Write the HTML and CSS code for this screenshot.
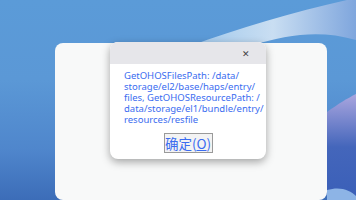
FILE: index.html
```html
<!DOCTYPE html>
<html lang="zh-cn">
<head>
    <meta charset="UTF-8">
    <title>对话框</title>
    <link rel="stylesheet" href="styles.css">
</head>
<body>
    <div class="desktop">
        <!-- 壁纸上的弧线 -->
        <svg class="wallpaper" width="356" height="200" viewBox="0 0 356 200">
            <defs>
                <linearGradient id="swoosh" x1="0" y1="0" x2="1" y2="0">
                    <stop offset="0" stop-color="#9fc8ec"/>
                    <stop offset="0.5" stop-color="#c9def2"/>
                    <stop offset="1" stop-color="#7fa6dd"/>
                </linearGradient>
                <linearGradient id="wave" x1="0" y1="0" x2="0" y2="1">
                    <stop offset="0" stop-color="#aaa6df"/>
                    <stop offset="0.5" stop-color="#4466bb"/>
                    <stop offset="1" stop-color="#3a5fb8"/>
                </linearGradient>
            </defs>
            <path d="M190 46 C 240 28, 300 10, 356 -2 L 356 40 C 320 30, 290 34, 250 46 Z" fill="url(#swoosh)"/>
            <path d="M327 112 C 338 104, 348 98, 356 94 L 356 200 L 327 200 Z" fill="url(#wave)"/>
            <path d="M327 190 C 340 186, 350 190, 356 196 L 356 200 L 327 200 Z" fill="#8db4e6"/>
        </svg>

        <!-- 后面的窗口 -->
        <div class="back-window"></div>

        <!-- 消息框 -->
        <div class="msgbox">
            <div class="msgbox-title">
                <span class="close">&#x2715;</span>
            </div>
            <div class="msgbox-body">
                <p class="msg">GetOHOSFilesPath: /data/ storage/el2/base/haps/entry/ files, GetOHOSResourcePath: / data/storage/el1/bundle/entry/ resources/resfile</p>
                <div class="btn-row">
                    <button class="ok">确定(<u>O</u>)</button>
                </div>
            </div>
        </div>
    </div>
</body>
</html>
```

FILE: styles.css
```css
* {
    padding: 0;
    margin: 0;
}

body {
    width: 356px;
    height: 200px;
    overflow: hidden;
    font-family: "Noto Sans", "Noto Sans CJK SC", sans-serif;
}

.desktop {
    position: relative;
    width: 356px;
    height: 200px;
    overflow: hidden;
    background: linear-gradient(180deg, #5b9bd8 0%, #5b98d6 40%, #4f86cc 75%, #3c6db8 100%);
}

.wallpaper {
    position: absolute;
    left: 0;
    top: 0;
}

.back-window {
    position: absolute;
    left: 55px;
    top: 43px;
    width: 272px;
    height: 157px;
    background-color: #f8f9f9;
    border-radius: 8px;
}

.msgbox {
    position: absolute;
    left: 110px;
    top: 42px;
    width: 156px;
    height: 117px;
    background-color: #fff;
    border-radius: 8px;
    overflow: hidden;
    box-shadow: 0 3px 8px rgba(0, 0, 0, 0.35);
}

.msgbox-title {
    height: 22px;
    background-color: #e6e6ea;
    display: flex;
    justify-content: flex-end;
    align-items: center;
    padding-right: 16px;
}

.close {
    font-size: 9px;
    color: #444;
}

.msgbox-body {
    padding: 6px 4px 0 14px;
}

.msg {
    font-size: 9.5px;
    line-height: 11px;
    color: #3a6cf0;
}

.btn-row {
    display: flex;
    justify-content: center;
    margin-top: 8px;
    margin-left: -10px;
}

.ok {
    width: 49px;
    height: 20px;
    padding: 0;
    border: 1px solid #9a9a9a;
    background-color: #f3f3f3;
    color: #3a6cf0;
    font-size: 13.5px;
    font-family: "Noto Sans CJK SC", sans-serif;
    line-height: 18px;
}
```
